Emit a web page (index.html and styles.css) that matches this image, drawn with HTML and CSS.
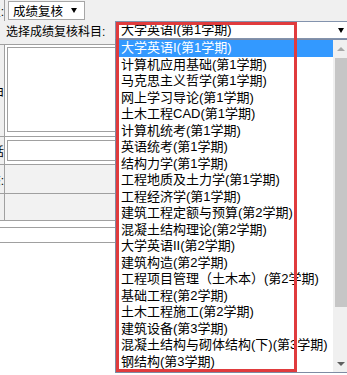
FILE: index.html
```html
<!DOCTYPE html>
<html lang="zh-CN">
<head>
<meta charset="utf-8">
<title>成绩复核</title>
<link rel="stylesheet" href="styles.css">
</head>
<body>
<div class="page">
  <div class="row r1">
    <div class="lbl"><span>类型:</span></div>
    <div class="cell pad3">
      <div class="sel1"><span>成绩复核</span><i class="tri"></i></div>
    </div>
  </div>
  <div class="row r2">
    <span class="lbl2">选择成绩复核科目:</span>
    <div class="combo">
      <div class="combo-text">大学英语I(第1学期)</div>
      <i class="tri tri-combo"></i>
      <div class="dropdown">
        <ul class="opts">
          <li class="on">大学英语I(第1学期)</li>
          <li>计算机应用基础(第1学期)</li>
          <li>马克思主义哲学(第1学期)</li>
          <li>网上学习导论(第1学期)</li>
          <li>土木工程CAD(第1学期)</li>
          <li>计算机统考(第1学期)</li>
          <li>英语统考(第1学期)</li>
          <li>结构力学(第1学期)</li>
          <li>工程地质及土力学(第1学期)</li>
          <li>工程经济学(第1学期)</li>
          <li>建筑工程定额与预算(第2学期)</li>
          <li>混凝土结构理论(第2学期)</li>
          <li>大学英语II(第2学期)</li>
          <li>建筑构造(第2学期)</li>
          <li>工程项目管理（土木本）(第2学期)</li>
          <li>基础工程(第2学期)</li>
          <li>土木工程施工(第2学期)</li>
          <li>建筑设备(第3学期)</li>
          <li>混凝土结构与砌体结构(下)(第3学期)</li>
          <li>钢结构(第3学期)</li>
        </ul>
        <div class="sb">
          <div class="sb-btn"><i class="up"></i></div>
          <div class="sb-track"><div class="thumb"></div></div>
          <div class="sb-btn"><i class="down"></i></div>
        </div>
      </div>
      <div class="mark"></div>
    </div>
  </div>
  <div class="row r3">
    <div class="lbl"><span>复核理由</span></div>
    <div class="cell pad2"><div class="ta"></div></div>
  </div>
  <div class="row r4">
    <div class="lbl"><span>联系电话</span></div>
    <div class="cell pad2"><div class="inp"></div></div>
  </div>
  <div class="row r5 grey">
    <div class="lbl"><span>状态:</span></div>
    <div class="cell"></div>
  </div>
  <div class="row r6 grey">
    <div class="lbl"><span></span></div>
    <div class="cell"></div>
  </div>
  <div class="spacer"></div>
  <div class="bar"></div>
</div>
</body>
</html>
```

FILE: styles.css
```css
html, body {
  margin: 0;
  padding: 0;
  overflow: hidden;
  background: #fff;
}
body {
  width: 347px;
  height: 375px;
  font-family: "Liberation Sans", "Noto Sans CJK SC", sans-serif;
  font-size: 12px;
  color: #000;
}
.page {
  position: relative;
  width: 347px;
}
.row {
  display: flex;
  border-bottom: 1px solid #a0a0a0;
  white-space: nowrap;
}
.lbl {
  width: 4px;
  flex: none;
  overflow: hidden;
  display: flex;
  justify-content: flex-end;
  align-items: center;
  background: #f0f0f0;
  border-right: 1px solid #a0a0a0;
}
.lbl span { flex: none; }
.cell { flex: 1; min-width: 0; }
.pad3 { padding-left: 3px; }
.pad2 { padding-left: 2px; }

.r1 {
  height: 21px;
  background: #f0f0f0;
  border-bottom: none;
}
.sel1 {
  margin-top: 1px;
  width: 77px;
  height: 19px;
  box-sizing: border-box;
  border: 1px solid #a6a6a6;
  background: #fff;
  display: flex;
  align-items: center;
  justify-content: space-between;
  padding: 0 7px 0 4px;
  font-size: 12.5px;
}
.tri {
  display: block;
  width: 0;
  height: 0;
  border-left: 3px solid transparent;
  border-right: 3px solid transparent;
  border-top: 5px solid #000;
}

.r2 {
  height: 23px;
  background: #f0f0f0;
  align-items: flex-start;
}
.lbl2 {
  width: 109px;
  padding-left: 6px;
  line-height: 20px;
  padding-top: 1px;
  flex: none;
}
.combo {
  position: relative;
  width: 236px;
  height: 18px;
  box-sizing: border-box;
  border: 1px solid #8393ad;
  background: #fff;
  flex: none;
  display: flex;
  align-items: center;
  justify-content: space-between;
  padding: 0 5px 0 5px;
  font-size: 13px;
}
.combo-text { line-height: 16px; }
.tri-combo { margin-right: 1px; }
.dropdown {
  position: absolute;
  top: 17px;
  left: -1px;
  width: 236px;
  height: 334px;
  box-sizing: border-box;
  border: 1px solid #7f8ba3;
  background: #fff;
  display: flex;
  z-index: 1;
}
.opts {
  list-style: none;
  margin: 0;
  padding: 0;
  flex: 1;
}
.opts li {
  height: 16.5px;
  line-height: 16.5px;
  padding-left: 5px;
}
.opts li.on {
  background: #3399ff;
  color: #fff;
}
.sb {
  width: 17px;
  flex: none;
  background: #f0f0f0;
  display: flex;
  flex-direction: column;
}
.sb-btn {
  height: 17px;
  display: flex;
  align-items: center;
  justify-content: center;
  flex: none;
}
.up {
  display: block;
  width: 0;
  height: 0;
  border-left: 4px solid transparent;
  border-right: 4px solid transparent;
  border-bottom: 4px solid #a8a8a8;
  margin-left: -2px;
}
.down {
  display: block;
  width: 0;
  height: 0;
  border-left: 4px solid transparent;
  border-right: 4px solid transparent;
  border-top: 4px solid #606060;
  margin-left: -2px;
}
.sb-track {
  flex: 1;
  padding-top: 1px;
}
.thumb {
  margin-left: 2px;
  height: 249px;
  background: #c6c6c6;
}
.mark {
  position: absolute;
  left: 0;
  top: 0;
  width: 181px;
  height: 350px;
  box-sizing: border-box;
  border: 3px solid #e03b3d;
  z-index: 2;
}

.r3 { height: 91px; }
.r4 { height: 27px; }
.r5 { height: 28px; }
.r6 { height: 26px; }
.grey { background: #f2f2f2; }
.ta {
  margin-top: 2px;
  width: 400px;
  height: 85px;
  box-sizing: border-box;
  border: 1px solid #a0a0a0;
  background: #fff;
}
.inp {
  margin-top: 3px;
  width: 400px;
  height: 21px;
  box-sizing: border-box;
  border: 1px solid #a0a0a0;
  background: #fff;
}
.spacer { height: 6px; }
.bar {
  height: 14px;
  border-top: 1px solid #a0a0a0;
  border-bottom: 1px solid #a0a0a0;
}
```
